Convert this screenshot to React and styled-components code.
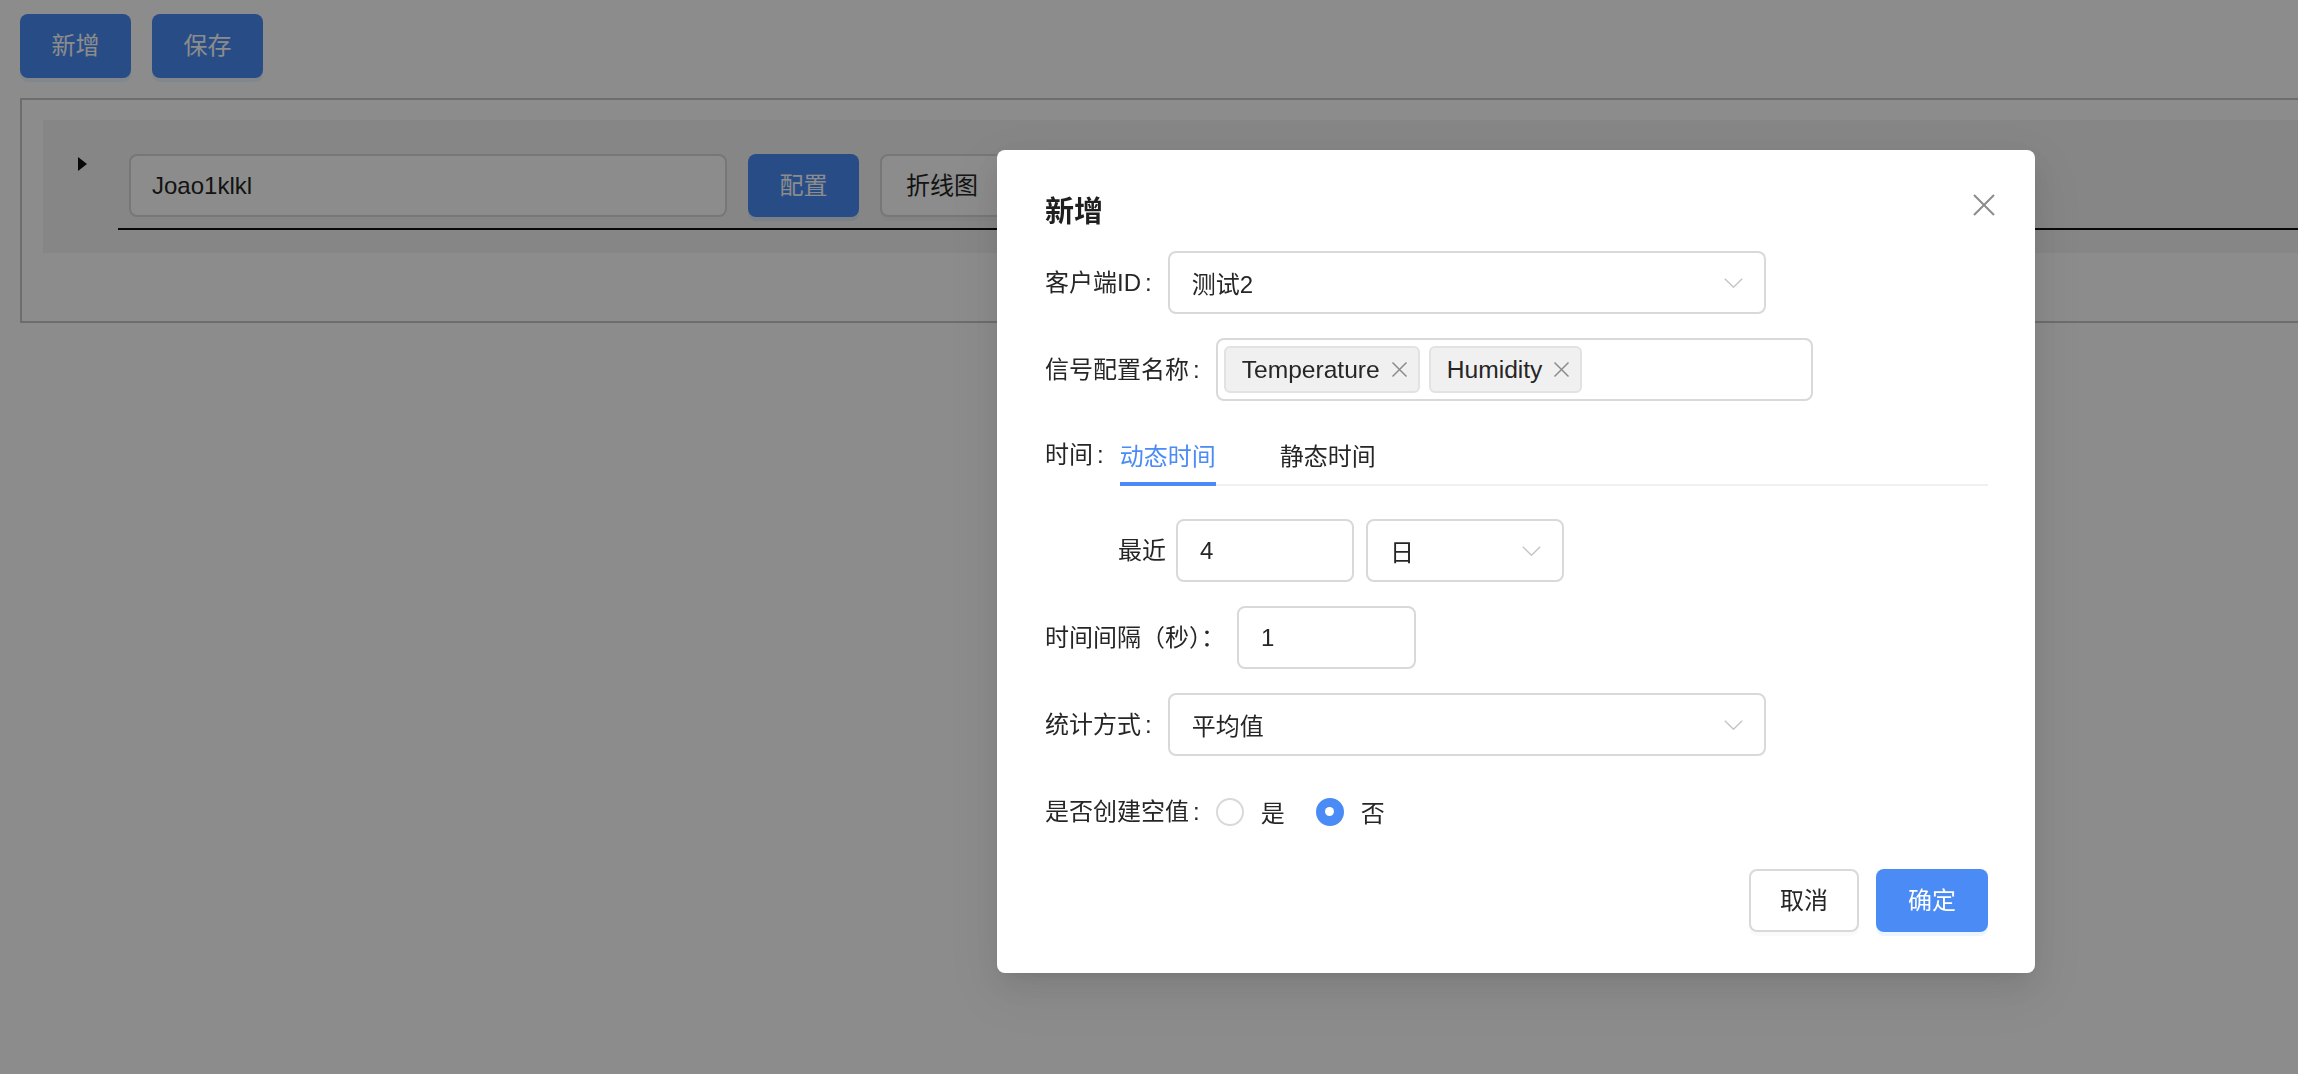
import React from "react";
import styled, { createGlobalStyle } from "styled-components";

const GlobalStyle = createGlobalStyle`
  html, body {
    margin: 0;
    padding: 0;
    background: #ffffff;
    overflow: hidden;
  }
  body {
    font-family: "Liberation Sans", "Noto Sans CJK SC", sans-serif;
    color: #262626;
  }
  * { box-sizing: border-box; }
`;

const BLUE = "#4a8bf5";

const Page = styled.div`
  padding: 14px 20px;
  width: 2298px;
  height: 1074px;
  overflow: hidden;
  position: relative;
`;

const Toolbar = styled.div`
  display: flex;
  gap: 21px;
`;

const Button = styled.button`
  height: ${(p) => p.$h || 63}px;
  min-width: ${(p) => p.$w || 0}px;
  padding: 0 24px;
  border-radius: 8px;
  font-family: inherit;
  font-size: 24px;
  line-height: 1;
  display: inline-flex;
  align-items: center;
  justify-content: center;
  cursor: pointer;
  flex-shrink: 0;
  ${(p) =>
    p.$primary
      ? `background: ${BLUE}; color: #ffffff; border: none; box-shadow: 0 4px 0 rgba(5,145,255,0.08);`
      : `background: #ffffff; color: #262626; border: 2px solid #d9d9d9; box-shadow: 0 4px 0 rgba(0,0,0,0.02);`}
`;

const OuterBox = styled.div`
  margin-top: 20px;
  width: 2400px;
  border: 2px solid #c6c6c6;
  padding: 20px 0 68px 21px;
`;

const Panel = styled.div`
  background: #f4f4f4;
  display: flex;
  align-items: flex-start;
  padding: 34px 0 23px 35px;
`;

const Caret = styled.svg`
  width: 10px;
  height: 14px;
  margin-top: 3px;
  flex-shrink: 0;
`;

const RowContent = styled.div`
  flex: 1;
  margin-left: 30px;
  display: flex;
  gap: 21px;
  padding: 0 0 11px 11px;
  border-bottom: 2px solid #111111;
`;

const PlainInput = styled.div`
  width: ${(p) => p.$w}px;
  height: 63px;
  border: 2px solid #d9d9d9;
  border-radius: 8px;
  background: #ffffff;
  display: flex;
  align-items: center;
  padding: 0 20px 0 ${(p) => p.$pl || 21}px;
  font-size: 24px;
  color: #262626;
  flex-shrink: 0;
`;

const Overlay = styled.div`
  position: fixed;
  inset: 0;
  background: rgba(0, 0, 0, 0.45);
`;

const Modal = styled.div`
  position: absolute;
  left: 997px;
  top: 150px;
  width: 1038px;
  background: #ffffff;
  border-radius: 8px;
  padding: 40px 47px 41px 48px;
  box-shadow: 0 12px 32px 0 rgba(0, 0, 0, 0.08), 0 6px 12px -8px rgba(0, 0, 0, 0.12),
    0 18px 56px 16px rgba(0, 0, 0, 0.05);
`;

const CloseButton = styled.button`
  position: absolute;
  top: 42px;
  right: 38px;
  width: 26px;
  height: 26px;
  padding: 0;
  border: none;
  background: transparent;
  display: flex;
  align-items: center;
  justify-content: center;
  cursor: pointer;
`;

const Title = styled.div`
  font-size: 29px;
  line-height: 44px;
  font-weight: 700;
  color: #1f1f1f;
  margin-bottom: 17px;
`;

const Form = styled.div`
  display: flex;
  flex-direction: column;
  gap: 24px;
`;

const FormRow = styled.div`
  display: flex;
  align-items: center;
  height: 63px;
  padding-left: ${(p) => p.$indent || 0}px;
`;

const Label = styled.label`
  font-size: 24px;
  line-height: 34px;
  color: #262626;
  white-space: nowrap;
  flex-shrink: 0;
  margin-right: ${(p) => p.$gap ?? 16}px;
  &::after {
    content: ${(p) => (p.$colon ? '":"' : '""')};
    margin-left: ${(p) => (p.$colon ? 4 : 0)}px;
  }
`;

const SelectBox = styled.div`
  width: ${(p) => p.$w}px;
  height: 63px;
  margin-left: ${(p) => p.$ml || 0}px;
  border: 2px solid #d9d9d9;
  border-radius: 8px;
  background: #ffffff;
  display: flex;
  align-items: center;
  justify-content: space-between;
  padding: 0 21px 0 22px;
  font-size: 24px;
  color: #262626;
  flex-shrink: 0;
`;

const Chevron = () => (
  <svg width="19" height="10" viewBox="0 0 19 10">
    <polyline points="0.8,0.8 9.5,9.2 18.2,0.8" fill="none" stroke="#c4c4c4" strokeWidth="1.4" />
  </svg>
);

const TagBox = styled.div`
  width: 597px;
  height: 63px;
  border: 2px solid #d9d9d9;
  border-radius: 8px;
  background: #ffffff;
  display: flex;
  align-items: center;
  gap: 9px;
  padding: 0 6px;
`;

const Tag = styled.span`
  height: 47px;
  display: inline-flex;
  align-items: center;
  gap: 11px;
  padding: 0 10px 0 16px;
  background: #f0f0f0;
  border: 2px solid #e2e2e2;
  border-radius: 6px;
  font-size: 24.6px;
  color: #262626;
`;

const SmallX = () => (
  <svg width="17" height="17" viewBox="0 0 17 17">
    <path d="M1.5 1.5 L15.5 15.5 M15.5 1.5 L1.5 15.5" stroke="#8c8c8c" strokeWidth="1.5" />
  </svg>
);

const TabRow = styled.div`
  display: flex;
  align-items: flex-start;
  height: 61px;
  margin-bottom: 9px;
`;

const TabLabel = styled(Label)`
  height: 59px;
  display: flex;
  align-items: center;
`;

const TabList = styled.div`
  flex: 1;
  display: flex;
  gap: 64px;
  border-bottom: 2px solid #f0f0f0;
`;

const Tab = styled.div`
  position: relative;
  height: 59px;
  display: flex;
  align-items: center;
  font-size: 24px;
  color: ${(p) => (p.$active ? BLUE : "#262626")};
  cursor: pointer;
  &::after {
    content: "";
    position: absolute;
    left: 0;
    right: 0;
    bottom: -2px;
    height: 4px;
    background: ${(p) => (p.$active ? BLUE : "transparent")};
  }
`;

const RadioGroup = styled.div`
  display: flex;
  align-items: center;
`;

const RadioItem = styled.label`
  display: flex;
  align-items: center;
  gap: 17px;
  margin-right: 31px;
  font-size: 24px;
  color: #262626;
  cursor: pointer;
`;

const RadioDot = styled.span`
  width: 28px;
  height: 28px;
  border-radius: 50%;
  display: inline-flex;
  align-items: center;
  justify-content: center;
  background: ${(p) => (p.$checked ? BLUE : "#ffffff")};
  border: 2px solid ${(p) => (p.$checked ? BLUE : "#d9d9d9")};
  &::after {
    content: "";
    width: 9px;
    height: 9px;
    border-radius: 50%;
    background: ${(p) => (p.$checked ? "#ffffff" : "transparent")};
  }
`;

const Footer = styled.div`
  display: flex;
  justify-content: flex-end;
  gap: 17px;
  margin-top: 26px;
`;

export default function App() {
  return (
    <>
      <GlobalStyle />
      <Page>
        <Toolbar>
          <Button $primary $h={64} $w={111}>新增</Button>
          <Button $primary $h={64} $w={111}>保存</Button>
        </Toolbar>
        <OuterBox>
          <Panel>
            <Caret viewBox="0 0 10 14">
              <polygon points="0,0 9,7 0,14" fill="#111" />
            </Caret>
            <RowContent>
              <PlainInput $w={598}>Joao1klkl</PlainInput>
              <Button $primary $w={111}>配置</Button>
              <Button $w={122}>折线图</Button>
            </RowContent>
          </Panel>
        </OuterBox>
      </Page>
      <Overlay>
        <Modal>
          <CloseButton aria-label="close">
            <svg width="22" height="22" viewBox="0 0 22 22">
              <path d="M1 1 L21 21 M21 1 L1 21" stroke="#8c8c8c" strokeWidth="2" />
            </svg>
          </CloseButton>
          <Title>新增</Title>
          <Form>
            <FormRow>
              <Label $colon>客户端ID</Label>
              <SelectBox $w={598}>
                <span>测试2</span>
                <Chevron />
              </SelectBox>
            </FormRow>
            <FormRow>
              <Label $colon>信号配置名称</Label>
              <TagBox>
                <Tag>
                  Temperature
                  <SmallX />
                </Tag>
                <Tag>
                  Humidity
                  <SmallX />
                </Tag>
              </TagBox>
            </FormRow>
            <TabRow>
              <TabLabel $colon>时间</TabLabel>
              <TabList>
                <Tab $active>动态时间</Tab>
                <Tab>静态时间</Tab>
              </TabList>
            </TabRow>
            <FormRow $indent={73}>
              <Label $gap={10}>最近</Label>
              <PlainInput $w={178} $pl={22}>4</PlainInput>
              <SelectBox $w={198} $ml={12}>
                <span>日</span>
                <Chevron />
              </SelectBox>
            </FormRow>
            <FormRow>
              <Label $gap={12}>时间间隔（秒）：</Label>
              <PlainInput $w={179} $pl={22}>1</PlainInput>
            </FormRow>
            <FormRow>
              <Label $colon>统计方式</Label>
              <SelectBox $w={598}>
                <span>平均值</span>
                <Chevron />
              </SelectBox>
            </FormRow>
            <FormRow>
              <Label $colon>是否创建空值</Label>
              <RadioGroup>
                <RadioItem>
                  <RadioDot />
                  是
                </RadioItem>
                <RadioItem>
                  <RadioDot $checked />
                  否
                </RadioItem>
              </RadioGroup>
            </FormRow>
          </Form>
          <Footer>
            <Button $w={110}>取消</Button>
            <Button $primary $w={112}>确定</Button>
          </Footer>
        </Modal>
      </Overlay>
    </>
  );
}
